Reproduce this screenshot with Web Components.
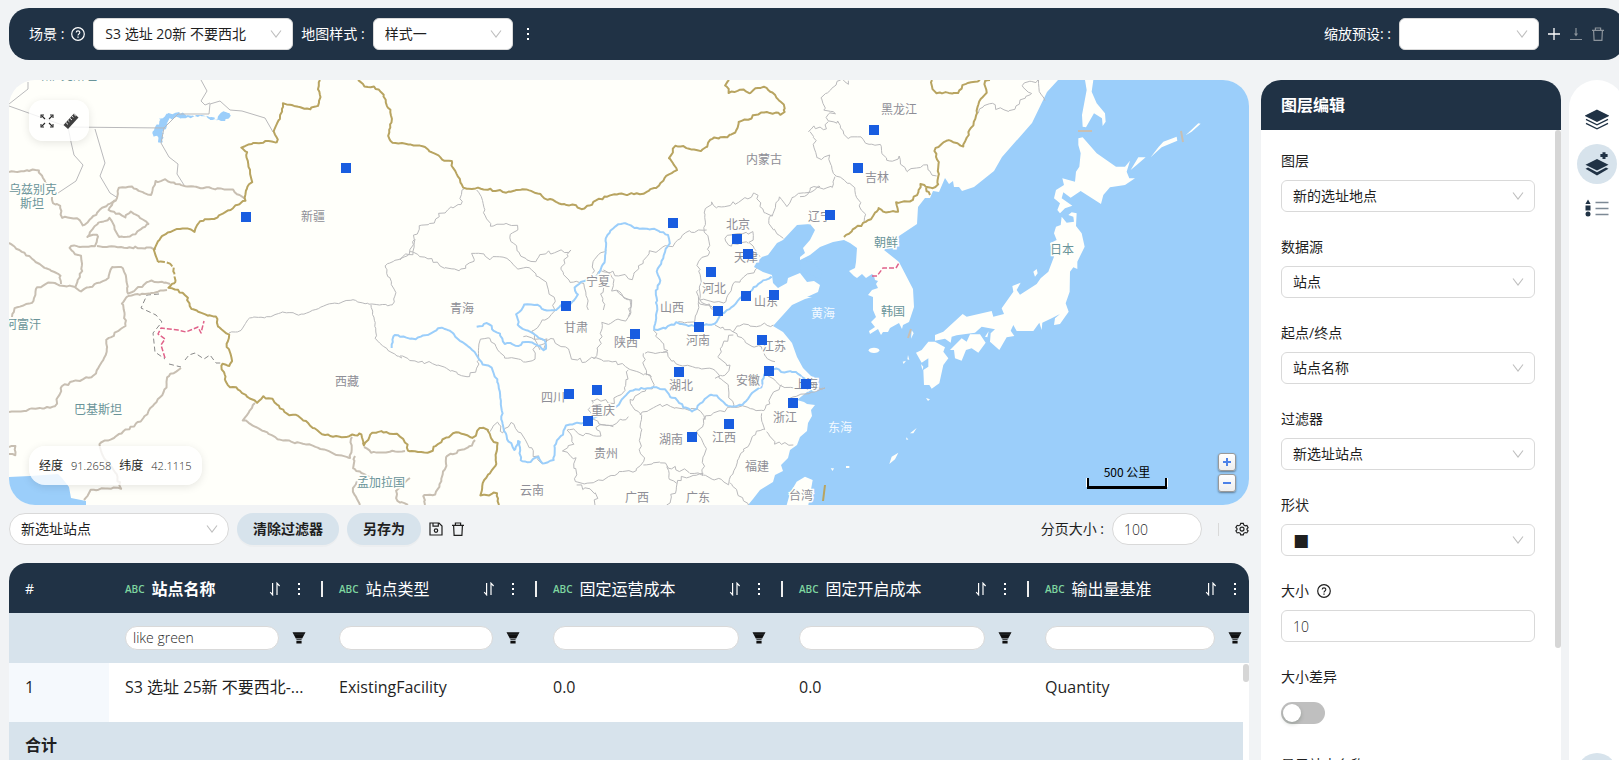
<!DOCTYPE html>
<html lang="zh-CN">
<head>
<meta charset="utf-8">
<title>选址地图</title>
<style>
  html, body { margin: 0; height: 100%; overflow: hidden; }
  body {
    background: #f1f3f5;
    color: #1f1f1f;
    font: 14px/22px "Open Sans", "Noto Sans CJK SC", sans-serif;
    font-weight: 300;
    --navy: #203245;
    --pale: #d7e3ec;
    --line: #d9d9d9;
  }
</style>
</head>
<body>
<planner-app>
  <top-bar slot="bar"></top-bar>
  <site-map slot="main"></site-map>
  <filter-bar slot="main"></filter-bar>
  <data-grid slot="main"></data-grid>
  <layer-panel slot="panel" heading="图层编辑">
    <ui-select label="图层" value="新的选址地点"></ui-select>
    <ui-select label="数据源" value="站点"></ui-select>
    <ui-select label="起点/终点" value="站点名称"></ui-select>
    <ui-select label="过滤器" value="新选址站点"></ui-select>
    <ui-select label="形状" value="■"></ui-select>
    <ui-input label="大小" value="10" help></ui-input>
    <ui-switch label="大小差异"></ui-switch>
    <ui-switch label="显示站点名称"></ui-switch>
  </layer-panel>
  <side-rail slot="rail"></side-rail>
</planner-app>

<script>
const icons = {
  help: `<svg width="14" height="14" viewBox="0 0 14 14" fill="none" stroke="currentColor"><circle cx="7" cy="7" r="6.3" stroke-width="1.2"/><path d="M5.2 5.6C5.2 3.3 8.8 3.3 8.8 5.5C8.8 7 7 6.9 7 8.4" stroke-width="1.1"/><path d="M7 9.6V10.7" stroke-width="1.3"/></svg>`,
  chevron: `<svg width="12" height="12" viewBox="0 0 12 12" fill="none" stroke="#bfbfbf" stroke-width="1.1"><path d="M1 2.5L6 9.2L11 2.5"/></svg>`,
  dots: `<svg width="14" height="14" viewBox="0 0 14 14" fill="currentColor"><path d="M6 1h2v2H6zM6 6h2v2H6zM6 11h2v2H6z"/></svg>`,
  plus: `<svg width="14" height="14" viewBox="0 0 14 14" stroke="currentColor" stroke-width="1.3"><path d="M7 1V13M1 7H13"/></svg>`,
  download: `<svg width="14" height="14" viewBox="0 0 14 14" fill="none" stroke="currentColor"><path d="M7 1V8M1 12.5H13" stroke-width="1.2"/><path d="M5 6.5L7 9.5L9 6.5Z" fill="currentColor" stroke="none"/></svg>`,
  trash: `<svg width="14" height="14" viewBox="0 0 14 14" fill="none" stroke="currentColor" stroke-width="1.2"><path d="M1 3.4H13M4.4 3V1H9.6V3M2.6 3.6L3.1 13.3H10.9L11.4 3.6"/></svg>`,
  save: `<svg width="14" height="14" viewBox="0 0 14 14" fill="none" stroke="currentColor" stroke-width="1.2"><path d="M1 1H10L13 4V13H1ZM4 1V4.2H9.3V1"/><circle cx="7" cy="8.6" r="1.7"/></svg>`,
  gear: `<svg width="14" height="14" viewBox="0 0 16 16" fill="none" stroke="currentColor" stroke-width="1.3"><path d="M6.5 1.5H9.5L10 3.4L11.7 4.4L13.6 3.9L15 6.4L13.7 7.8V8.9L15 10.1L13.5 12.5L11.7 12L10 13L9.5 14.7H6.5L6 13L4.3 12L2.5 12.5L1 10.1L2.3 8.8V7.4L1 6.2L2.5 3.8L4.3 4.3L6 3.4Z"/><circle cx="8" cy="8.1" r="2.3"/></svg>`,
  sort: `<svg width="12" height="14" viewBox="0 0 12 14" fill="none" stroke="currentColor" stroke-width="1.2"><path d="M1.2 10.2L3.6 12.8V1M8 13V1.2L10.6 4"/></svg>`,
  funnel: `<svg width="16" height="14" viewBox="-1 0 16 14" fill="#101010"><path d="M0.5 1.2H13.5L10.2 7.4H3.8ZM4.4 8.2H9.6V9.2H4.4ZM4.4 10H9.6V12.6H4.4Z"/><path d="M2 3.2H12" stroke="#333c42" stroke-width=".6"/></svg>`,
  expand: `<svg width="14" height="14" viewBox="0 0 14 14" fill="none" stroke="#262626" stroke-width="1.1"><path d="M1.500 1.500L5 5M12.500 1.500L9 5M1.500 12.500L5 9M12.500 12.500L9 9"/><path d="M1 4V1H4M10 1H13V4M1 10V13H4M13 10V13H10"/></svg>`,
  ruler: `<svg width="18" height="18" viewBox="0 0 18 18"><path d="M1.5 13L12 1.5L16.5 5.5L6 17Z" fill="#3f3f3f"/><path d="M4 10.6L6 12.4M6 8.5L7.4 9.8M8 6.3L10 8M10 4.2L11.4 5.4M11.8 2.2L13.8 4" stroke="#fff" stroke-width=".9"/></svg>`,
  layers: `<svg width="24" height="22" viewBox="0 0 24 22" fill="none" stroke="#203245" stroke-width="1.3"><path d="M12 1.3L23 6.8L12 12.3L1 6.8Z" fill="#203245"/><path d="M1 10.3L12 15.8L23 10.3M1 14.3L12 19.8L23 14.3"/></svg>`,
  layersAdd: `<svg width="24" height="24" viewBox="0 0 24 24" fill="#203245"><path d="M12 7L23.5 12.8L12 18.6L.5 12.8Z"/><path d="M.5 16.8L3 15.6L12 20.2L21 15.6L23.5 16.8L12 23.4Z"/><path d="M17.5.2H20.500V2H22.600V5H20.500V7H17.500V5H15.400V2H17.500Z"/></svg>`,
  legend: `<svg width="24" height="18" viewBox="0 0 24 18" fill="#203245"><path d="M3 .5L5.6 5H.4ZM.5 6.4H5.5V11.4H.5Z"/><circle cx="3" cy="15" r="2.5"/><path d="M10.5 3.5H23.5M10.5 9.5H23.5M10.5 15.5H23.5" stroke="#7d8995" stroke-width="1.3"/></svg>`
};

const base = `
  * { box-sizing: border-box; }
  svg { display: block; flex: none; }
  button, input, select { font: inherit; color: inherit; margin: 0; }
  button { border: 0; background: none; padding: 0; cursor: pointer; }
  .icon { display: grid; place-items: center; width: 22px; height: 22px; }
`;

function mount(el, css, html) {
  const template = document.createElement('template');
  template.innerHTML = `<style>${base}${css}</style>${html}`;
  el.attachShadow({ mode: 'open' }).appendChild(template.content.cloneNode(true));
}

class PlannerApp extends HTMLElement {
  constructor() {
    super();
    mount(this, `
      :host { display: flex; flex-direction: column; gap: 20px; height: calc(100vh + 33px); padding-top: 8px; margin: 0 -6px 0 9px; box-sizing: border-box; }
      .body { flex: 1; min-height: 0; display: grid; grid-template-columns: minmax(0, 1fr) 300px 56px; gap: 8px; }
      main { display: flex; flex-direction: column; min-height: 0; padding-right: 4px; }
    `, `
      <slot name="bar"></slot>
      <div class="body">
        <main><slot name="main"></slot></main>
        <slot name="panel"></slot>
        <slot name="rail"></slot>
      </div>
    `);
  }
}

// Drop-down with its own label. inline = label on the left.
class UiSelect extends HTMLElement {
  constructor() {
    super();
    const value = this.getAttribute('value') || '';
    const label = this.getAttribute('label') || '';
    const inline = this.hasAttribute('inline');
    mount(this, `
      :host { display: flex; flex-direction: column; gap: 8px; }
      :host([inline]) { flex-direction: row; align-items: center; }
      .label { display: flex; align-items: center; gap: 7px; font-weight: 400; }
      .box { display: grid; align-items: center; width: var(--select-width, 100%); }
      .box svg { grid-area: 1 / 1; justify-self: end; margin-right: 11px; pointer-events: none; }
      select {
        grid-area: 1 / 1; appearance: none; width: 100%; height: 32px; padding: 0 28px 0 11px;
        border: 1px solid var(--line); border-radius: var(--select-radius, 6px);
        background: #fff; color: #1f1f1f; font-weight: 400;
      }
      .shape { font: 17px/20px "DejaVu Sans", sans-serif; }
    `, `
      ${label ? `<div class="label"><label for="s">${label}${inline ? ' :' : ''}</label>${this.hasAttribute('help') ? icons.help : ''}</div>` : ''}
      <div class="box">
        <select id="s" ${label ? '' : 'aria-label="过滤器"'} class="${value === '■' ? 'shape' : ''}"><option>${value}</option></select>
        ${icons.chevron}
      </div>
    `);
  }
}

class UiInput extends HTMLElement {
  constructor() {
    super();
    mount(this, `
      :host { display: flex; flex-direction: column; gap: 8px; }
      :host([inline]) { flex-direction: row; align-items: center; }
      .label { display: flex; align-items: center; gap: 8px; font-weight: 400; }
      input {
        width: var(--input-width, 100%); height: 32px; padding: 0 11px;
        border: 1px solid var(--line); border-radius: var(--input-radius, 6px); background: #fff;
      }
    `, `
      <div class="label"><label for="i">${this.getAttribute('label')}${this.hasAttribute('inline') ? ' :' : ''}</label>${this.hasAttribute('help') ? icons.help : ''}</div>
      <input id="i" type="text" value="${this.getAttribute('value')}">
    `);
  }
}

class UiSwitch extends HTMLElement {
  constructor() {
    super();
    mount(this, `
      :host { display: flex; flex-direction: column; gap: 8px; }
      label { font-weight: 400; }
      .row { display: flex; align-items: center; height: 34px; }
      input {
        appearance: none; width: 44px; height: 22px; border-radius: 11px; padding: 2px;
        background: #bfbfbf; display: flex;
      }
      input::before { content: ""; width: 18px; height: 18px; border-radius: 50%; background: #fff; box-shadow: 0 2px 4px rgba(0,35,11,.2); }
      input:checked { background: var(--navy); justify-content: end; }
    `, `
      <label for="c">${this.getAttribute('label')}</label>
      <div class="row"><input id="c" type="checkbox" role="switch"></div>
    `);
  }
}

class TopBar extends HTMLElement {
  constructor() {
    super();
    mount(this, `
      :host { display: flex; align-items: center; gap: 8px; height: 52px; padding: 0 16px 0 20px; border-radius: 20px; background: var(--navy); color: #fff; flex: none; }
      .scene { --select-width: 200px; }
      .style, .preset { --select-width: 140px; }
      .space { flex: 1; }
      .icon { margin-left: -4px; }
      .tools { display: flex; margin-left: -4px; }
      .tools .icon { margin-left: 0; }
      .dim { color: #8b939b; }
    `, `
      <ui-select class="scene" inline help label="场景" value="S3 选址 20新 不要西北"></ui-select>
      <ui-select class="style" inline label="地图样式" value="样式一"></ui-select>
      <button class="icon" aria-label="更多">${icons.dots}</button>
      <span class="space"></span>
      <ui-select class="preset" inline label="缩放预设:" value=""></ui-select>
      <div class="tools">
        <button class="icon" aria-label="新增">${icons.plus}</button>
        <button class="icon dim" aria-label="下载">${icons.download}</button>
        <button class="icon dim" aria-label="删除">${icons.trash}</button>
      </div>
    `);
  }
}

const sites = [[346,168],[246,217],[673,223],[737,239],[748,254],[711,272],[746,296],[774,295],[718,311],[566,306],[635,334],[699,327],[762,340],[769,371],[679,372],[569,394],[597,390],[588,421],[806,384],[793,403],[729,424],[692,437],[874,130],[858,168],[830,215]];

const provinces = [['新疆',313,217],['内蒙古',764,160],['黑龙江',899,110],['吉林',877,178],['辽宁',820,217],['北京',738,225],['天津',746,258],['河北',714,289],['山东',766,302],['山西',672,308],['宁夏',598,282],['甘肃',576,328],['青海',462,309],['陕西',626,343],['河南',698,341],['江苏',774,347],['安徽',748,381],['湖北',681,386],['上海',806,385],['浙江',785,418],['四川',553,398],['重庆',603,411],['贵州',606,454],['湖南',671,440],['江西',724,438],['福建',757,467],['台湾',801,496],['云南',532,491],['广西',637,498],['广东',698,498],['西藏',347,382]];

const countries = [['乌兹别克',33,190],['斯坦',32,204],['阿富汗',23,325],['巴基斯坦',98,410],['孟加拉国',381,483],['朝鲜',886,243],['日本',1062,250],['韩国',893,312],['哈萨克斯坦',67,76],['蒙古',556,75]];

const seas = [['黄海',823,314],['东海',840,428]];

const texts = (list) => list.map(([name, x, y]) => `<text x="${x}" y="${y + 4}">${name}</text>`).join('');

// Turns straight border segments into natural looking ones.
function roughen(path, step, amount) {
  let seed = 7;
  const random = () => {
    seed = (seed * 16807) % 2147483647;
    return seed / 2147483647 - 0.5;
  };
  const parts = path.getAttribute('d').split('M').filter(Boolean);
  const probe = document.createElementNS('http://www.w3.org/2000/svg', 'path');
  path.setAttribute('d', parts.map((part) => {
    probe.setAttribute('d', 'M' + part);
    const length = probe.getTotalLength();
    const count = Math.max(1, Math.round(length / step));
    const points = [];
    for (let i = 0; i <= count; i++) {
      const p = probe.getPointAtLength(length * i / count);
      const k = i === 0 || i === count ? 0 : amount;
      points.push(`${(p.x + random() * k).toFixed(1)} ${(p.y + random() * k).toFixed(1)}`);
    }
    return 'M' + points.join('L');
  }).join(''));
}

class SiteMap extends HTMLElement {
  constructor() {
    super();
    mount(this, `
      :host { display: block; position: relative; flex: none; border-radius: 26px; overflow: hidden; background: #fffffa; }
      .map { width: 100%; height: auto; }
      .map path { fill: none; stroke-linejoin: round; vector-effect: non-scaling-stroke; }
      .map .sea { fill: #9bcefa; }
      .map .land path, .map .land ellipse { fill: #fffffa; }
      .gold path { stroke: #b8a460; stroke-width: 2; }
      .taupe path { stroke: #c8bfb2; stroke-width: 2; }
      .prov path { stroke: #b9b9bb; stroke-width: 1; }
      .river path { stroke: #9bcefa; stroke-width: 2; }
      .cease path { stroke: #e0628a; stroke-width: 1.5; stroke-dasharray: 5 2; }
      .claim path { stroke: #8a8a8a; stroke-width: 1; stroke-dasharray: 5 3; }
      text { font-size: 12px; text-anchor: middle; paint-order: stroke; stroke: #fffffa; stroke-width: 3px; fill: #8e8e96; font-weight: 400; }
      .country text { fill: #6a9499; }
      .ocean text { fill: #f4faff; stroke: none; }
      .card { position: absolute; left: 20px; display: flex; align-items: center; background: rgba(255,255,255,.8); border-radius: 14px; box-shadow: 0 2px 8px rgba(0,0,0,.1); }
      .tools { top: 20px; height: 41px; padding: 0 7px; gap: 2px; }
      .coords { bottom: 20px; height: 39px; padding: 0 10px; gap: 8px; font-size: 11px; border-radius: 16px; }
      .coords b { font-size: 12px; font-weight: 400; }
      .scale { position: absolute; right: 81px; bottom: 18px; width: 82px; font: 400 12px/12px "Noto Sans CJK SC", sans-serif; color: #000; text-align: center; }
      .scale i { display: block; height: 9px; border: solid #fff; border-width: 0 1px 1px; }
      .scale i::before { content: ""; display: block; height: 8px; border: solid #000; border-width: 0 2px 3px; }
      .zoom { position: absolute; right: 13px; bottom: 13px; display: grid; gap: 3px; }
      .zoom button { width: 18px; height: 18px; display: grid; place-items: center; border: 1px solid #999; border-radius: 3px; background: linear-gradient(#fff, #eee); box-shadow: 0 1px 2px rgba(0,0,0,.4); }
    `, `
      <svg class="map" viewBox="9 80 1240 425" role="img" aria-label="站点地图">
        <path class="sea" d="M1058 80L1047 92L1032 123L1002 157L994 171L974 187L962 191L959 187L954 187L953 181L949 184L945 178L939 192L933 191L930 198L925 198L918 207L917 224L899 236L884 250L899 262L913 289L914 307L909 322L903 325L902 329L899 323L890 328L888 332L883 332L881 335L878 329L870 334L869 331L875 327L871 322L876 317L873 310L873 297L868 295L872 290L878 288L876 284L878 281L875 280L874 276L872 274L866 278L862 274L857 278L854 276L849 271L855 268L856 262L857 248L850 243L844 240L833 242L820 247L810 255L800 260L800 257L805 253L803 248L810 240L815 230L810 224L797 225L783 240L777 243L768 255L762 257L756 263L754 267L763 272L772 275L773 283L778 288L787 283L788 278L800 273L807 282L814 281L820 285L818 292L807 297L800 297L812 297L805 299L792 305L783 315L773 326L783 332L792 343L797 357L803 368L813 378L818 387L807 392L797 400L804 402L807 404L815 405L811 410L812 416L808 423L807 431L800 437L797 445L790 450L788 458L781 465L783 471L775 475L773 482L760 490L753 499L748 505H1249V80Z"/>
        <path class="sea" d="M801 260L812 262L822 271L820 279L800 270Z"/>
        <path class="sea" d="M9 477L30 476L58 474L62 478L69 487L71 498L86 501V505H9Z"/>
        <path class="sea lake" d="M167 114L172 114L176 112L186 115L207 116L216 120L222 112L230 113L229 119L216 121L206 117L180 117L170 119L163 130L162 143H158L157 137L152 135L155 126L160 124L160 118Z"/>

        <g class="land">
          <g transform="translate(800 70) scale(.33333)">
            <path d="M835 205L848 202L890 250L948 290L975 290L990 272L980 305L988 325L1005 325L975 345L930 352L910 375L903 402L842 363L812 383L790 367L785 385L817 407L795 415L780 430L772 420L780 400L762 385L768 360L792 345L787 325L825 335L828 305L838 290L842 250L835 225Z"/>
            <path d="M855 30H880L875 65L890 100L915 130L917 155L908 168L906 145L882 130L858 172L848 170L846 135L860 60Z"/>
            <path d="M785 440L800 458L822 455L820 440L805 435L815 427L830 430L828 468L845 490L854 530L832 575V597L820 592L810 605L809 665L797 700L806 725L780 762L762 765L765 745L780 732L755 745L727 758L725 780L718 758L700 783H650L640 765L632 782L643 798L620 802L598 840L570 815L572 790L585 778L545 770L525 788L470 796L455 800L452 818L435 806L405 812V795L430 785L488 732L500 740L575 723L580 740L612 732L605 715L640 665L637 648L662 638L650 660L660 674L710 642L722 625L745 605L762 560L750 520L770 510L762 490L768 470L782 465Z"/>
            <path d="M385 815L405 815L435 832L430 845L445 865L430 885L418 940L395 956L388 945L372 945L370 900L385 890V865L365 878L348 848L365 840Z"/>
            <path d="M450 840L485 805L500 815L510 793L540 793L557 818L535 848L515 835L498 840L485 872L465 865L462 840Z"/>
            <path d="M700 605L710 597L713 610L705 620ZM992 300L1015 262L1037 262L1010 285ZM1052 262L1075 232L1090 215L1130 200L1132 212L1085 232ZM1157 196L1195 160L1202 161L1175 185ZM330 1090L350 1074L340 1090ZM268 1182L275 1160L295 1148L285 1168ZM92 1195H102L98 1203ZM138 1188H148V1194H138ZM308 875L318 872L311 882ZM324 855L328 870L322 868ZM335 780L341 790L333 806ZM378 984L390 988L384 993ZM318 1102L325 1108L320 1110ZM363 882L370 890L367 900ZM555 800L566 784L562 802Z"/>
            <ellipse cx="222" cy="841" rx="16" ry="8"/>
            <path d="M-40 1305L-30 1270L-10 1235L15 1220L38 1230L25 1305Z"/>
          </g>
        </g>

        <g class="prov">
          <g class="tile" transform="translate(800 70) scale(.33333)">
            <path d="M122 30L60 85L75 120L105 125L80 135L85 155H118L125 190L150 205L185 200L190 220L240 225L245 250L280 280L298 260L320 310L375 285L410 318"/>
            <path d="M130 30L142 45L145 32M25 185L35 170L70 180L85 155M30 185L45 210L42 250L60 270L85 260L100 310L140 340L155 340L165 375L180 395L192 440V458M0 380L40 355L75 358L105 345V320"/>
            <path d="M535 130L550 105L575 98L590 118L635 122L655 95L695 75L665 45L715 30L722 80L735 92"/>
          </g>
          <g class="tile" transform="translate(400 70) scale(.33333)">
            <path d="M195 355L180 375L185 400L120 430L88 465L55 470L30 545L0 570M230 360L252 410L247 430L280 470L348 460L350 485L325 510L375 560L412 575L425 550L480 545L510 540L480 600L515 640L550 635L565 720"/>
            <path d="M30 545L95 570L120 590L190 600L220 570V548L270 565L310 560L350 595L390 595L420 620L460 680L465 720M620 540L585 560L580 620L610 600L690 625L710 600L750 545L830 520L850 490L920 480"/>
            <path d="M610 600L640 620L635 660L690 690L685 740M605 640L610 720M945 720L895 690L900 620L895 580L930 550L915 470L910 430L940 390L950 415L1020 395L1065 365L1090 430L1115 433L1135 380L1160 410L1180 380L1260 350M1115 435L1110 465L1150 505"/>
            <path d="M975 505L1000 490L1060 490L1050 520L1080 560M975 505L980 525L1045 520M900 690L970 700L1000 640L1060 610L1070 595"/>
          </g>
          <g class="tile" transform="translate(400 290) scale(.33333)">
            <path d="M0 198L50 215L120 225L160 245L190 262L230 245L240 150L265 140L290 180L325 205L370 215L400 205L405 180L460 140L480 165L500 165L520 205L560 215L580 200L600 160L605 100L690 85L692 35L650 0"/>
            <path d="M580 205L640 215L685 235L755 260L758 290L690 330L690 340L720 375L720 460L730 520L700 540L630 560L600 570L530 580L525 510L490 480L520 460L500 410L530 430L600 440L590 410L640 400L685 380M685 240L680 290L640 335L575 330L570 370L600 400L640 410"/>
            <path d="M735 190L800 185L760 120M730 190L735 250L755 260M790 185L830 225L945 240L970 270L985 300L1000 350M895 0L890 90L835 95M895 35L960 60M945 105L1000 125L1040 160L1085 175L1100 210L1125 215M1000 125L1015 105L1120 105M1000 135L980 150L950 200L990 225V250L945 265"/>
            <path d="M720 375L770 345L850 355L900 360L910 385L985 355L1030 350L1090 365L1110 330L1145 285M910 385L895 430L915 480L910 555L800 530L790 515L730 525M910 555L985 580L1010 520L1060 430L1095 425L1085 370M1100 425L1130 460L1180 465M990 578L1045 645M910 550L840 560L830 590L800 645M800 530L805 570L830 580M530 585L590 610L585 645M270 425L290 390L310 430L330 400L365 440L400 490L425 520M420 180L400 130L425 90L470 60"/>
            <path d="M370 140L440 150L430 180M1100 250L1150 295L1275 293M1170 325L1220 310L1275 295"/>
          </g>
          <g class="fine">
            <path d="M229 333L240 331L250 317L272 317L280 312L303 315L325 305L355 300L371 305H393L396 293L384 265L412 254L414 244L415 239"/>
            <path d="M371 305L375 325L376 340L390 352L402 358"/>
          </g>
          <path d="M28 82L28 89L9 104M9 106L68 127L164 128L178 114L209 114L210 104L220 101L230 110L242 111L265 118L273 132M201 80L207 91L201 101L205 105L210 103M95 129L105 163L100 176L110 193L118 198M68 127L71 142L74 155L83 165L76 181L58 193M164 128L161 143L169 157L178 164L177 174L184 185"/>
        </g>
        <g class="claim">
          <path d="M159 294L147 295L141 308L156 315L162 322L153 333L155 352L165 359M169 364L181 367M185 360L189 355L195 353L204 359L210 355L216 363L221 363"/>
        </g>

        <g class="taupe fine">
          <path d="M9 172L38 170L47 185M52 197V203L60 205L61 217L78 219L83 226L98 212L115 200L120 188L132 187L152 195L155 182L165 180L184 186L232 190L245 199"/>
          <path d="M115 200L108 210L125 217L130 211L149 224L130 237H118L110 218L96 225L86 237L98 235L95 246H70L72 252L80 255L82 270L75 287L80 291L108 279L112 267L120 266L127 277L128 294L150 281L170 284M97 246L125 247L148 248L156 249"/>
          <path d="M9 243L45 268L60 275L61 284M12 317L14 309L33 302L36 288L50 283L75 287M128 296L167 290M128 296L122 304L126 325L106 340L107 352L95 375L62 386L55 407L9 412M181 368L168 375L165 390L140 422L113 438L100 443L101 455L115 472L121 488L90 490L84 500"/>
          <path d="M255 403L243 420L280 440L310 445L350 459L352 437M364 447L370 452L405 451M355 456L352 468L375 480M357 481L352 490L360 505M410 478L397 490L395 500L408 505M475 440L473 445L447 456L445 470L435 495L423 494L425 505"/>
          <path d="M9 447L15 446V455L9 454"/>
        </g>

        <g class="river">
          <g class="tile" transform="translate(400 290) scale(.33333)">
            <path d="M-25 174L-20 133L10 142L45 147L60 138L90 135L105 120L125 113L140 122L155 123L165 140L190 160L215 177L235 205L250 222L270 230L290 265V280L298 285L300 330L308 360L305 390L320 440L343 482L357 450L362 515L385 517L415 500L425 523L462 510V465L485 440L500 405L560 395L650 348L690 300L755 292L795 298L812 325L825 325L850 350L880 365L910 332L930 312L955 320L985 352L1025 345L1060 305L1080 295L1100 240L1130 235L1145 245L1185 245L1210 265L1250 280"/>
            <path d="M230 110H245L255 97L272 105L280 125L300 130L310 160H332L350 170L375 155L415 165L430 182L440 175L432 150L410 140L390 125L355 108L350 70L375 45L410 45L435 60L470 58L480 48L515 40L533 18L520 -5L545 -25L590 -40L615 -90L618 -155L640 -190L670 -202L710 -185L770 -182L808 -162V-140L790 -100L770 -55L780 -30L768 0L770 60L762 120L800 113L830 98L860 108L945 103L960 75L990 55L1030 15L1055 0L1080 -20L1115 -40"/>
          </g>
        </g>

        <g class="gold fine">
          <path d="M320 80L318 87L320 97L318 106L314 106L310 109L297 107L284 103L279 120L273 133L278 140L276 143L267 141L253 144L241 147L247 153L248 167L253 180L247 187L245 201L233 207L214 219L200 220L194 231L184 228L172 231L160 237L154 248L158 262"/>
          <path stroke-dasharray="7 2" d="M158 262H168L173 267L175 283"/>
          <path d="M175 283L168 287L177 290L187 297L190 308L203 314L216 317L218 327L229 335L226 345L232 358L230 367L221 364L228 387L237 388L258 403L262 397L270 398L288 415L297 415L312 427L323 435L340 437L362 434L364 446L370 435L377 431L398 435L407 443V451L430 452L437 444L455 432L474 438L481 427L488 430L491 440L497 443L496 465L482 482L481 496L497 493L499 505"/>
          <path d="M358 80L366 87L374 87L384 95L386 105L391 112V125L388 135L391 143L407 144L425 147L443 160H451L452 165L458 178L465 188L477 188L507 192L523 189L538 193L543 198L552 200L562 205H575L582 209L603 198L615 194L643 194L656 188L665 177L677 169L669 158L675 146H683L687 149L699 151L707 147L712 138H725L735 132L740 121L751 119L752 116L765 112L782 114L785 112L783 105L773 93L765 87H756L750 94L743 90L730 93L725 85L729 80"/>
          <path d="M932 80L931 85L935 93L957 93L963 85L980 80M990 80L984 82L987 93L978 102L975 120L963 146L947 140L935 149L939 163L938 185L930 188L921 184L917 195L908 202H896L898 212H883L879 207L868 222L855 228L844 237M926 188L930 195"/>
        </g>
        <g class="gold"><path d="M825 485L823 501"/></g>
        <g class="taupe"><path d="M1078 131H1092M1181 131L1183 142M911 329L908 338"/></g>
        <g class="cease">
          <path d="M872 276H877L883 268H896L899 263M165 358L161 345L165 339L158 334L161 328L178 330L186 332L198 327L201 333L204 321"/>
        </g>

        <g>${texts(provinces)}</g>
        <g class="country">${texts(countries)}</g>
        <g class="ocean">${texts(seas)}</g>
        <g fill="#195de0">${sites.map(([x, y]) => `<rect x="${x - 5}" y="${y - 5}" width="10" height="10"/>`).join('')}</g>
      </svg>
      <div class="card tools">
        <button class="icon" aria-label="全屏">${icons.expand}</button>
        <button class="icon" aria-label="测量">${icons.ruler}</button>
      </div>
      <div class="card coords"><b>经度</b><span>91.2658</span><b>纬度</b><span>42.1115</span></div>
      <div class="scale">500 公里<i></i></div>
      <div class="zoom">
        <button aria-label="放大"><svg width="10" height="10" stroke="#4d82e8" stroke-width="2"><path d="M5 1V9M1 5H9"/></svg></button>
        <button aria-label="缩小"><svg width="10" height="10" stroke="#4d82e8" stroke-width="2"><path d="M1 5H9"/></svg></button>
      </div>
    `);
    this.shadowRoot.querySelectorAll('.prov .tile path').forEach((p) => roughen(p, 11, 12));
    this.shadowRoot.querySelectorAll('.river .tile path').forEach((p) => roughen(p, 9, 5));
    this.shadowRoot.querySelectorAll('.fine path').forEach((p) => roughen(p, 3, 2));
    this.shadowRoot.querySelectorAll('.lake').forEach((p) => roughen(p, 2, 3));
  }
}

class FilterBar extends HTMLElement {
  constructor() {
    super();
    mount(this, `
      :host { display: flex; align-items: center; gap: 8px; margin: 8px 0 18px; flex: none; }
      .filter { --select-width: 220px; --select-radius: 16px; }
      .size { --input-width: 90px; --input-radius: 16px; }
      .pill { height: 32px; padding: 0 16px; border-radius: 16px; background: var(--pale); font-weight: 700; box-shadow: 0 2px 0 rgba(0,0,0,.02); }
      .tools { display: flex; margin-left: -4px; }
      .space { flex: 1; }
      .rule { width: 1px; height: 13px; margin: 0 8px; background: var(--line); }
    `, `
      <ui-select class="filter" value="新选址站点"></ui-select>
      <button class="pill">清除过滤器</button>
      <button class="pill">另存为</button>
      <div class="tools">
        <button class="icon" aria-label="保存">${icons.save}</button>
        <button class="icon" aria-label="删除">${icons.trash}</button>
      </div>
      <span class="space"></span>
      <ui-input class="size" inline label="分页大小" value="100"></ui-input>
      <span class="rule"></span>
      <button aria-label="设置">${icons.gear}</button>
    `);
  }
}

const columns = [
  { title: '站点名称', width: 214, filter: 'like green', cell: 'S3 选址 25新 不要西北-...', bold: true },
  { title: '站点类型', width: 214, filter: '', cell: 'ExistingFacility' },
  { title: '固定运营成本', width: 246, filter: '', cell: '0.0' },
  { title: '固定开启成本', width: 246, filter: '', cell: '0.0' },
  { title: '输出量基准', width: 230, filter: '', cell: 'Quantity' }
];

class DataGrid extends HTMLElement {
  constructor() {
    super();
    mount(this, `
      :host { display: block; position: relative; flex: 1; min-height: 0; overflow: hidden; border-radius: 18px 18px 0 0; background: #fff; }
      table { width: calc(100% + 10px); table-layout: fixed; border-collapse: collapse; font-size: 16px; line-height: 24px; font-weight: 400; }
      th, td { padding: 0 16px; text-align: left; font-weight: 400; }
      .head th { height: 50px; padding: 2px 0 0 16px; background: var(--navy); color: #fff; }
      .head th:first-child { font-size: 14px; }
      .cell { display: flex; align-items: center; }
      .abc { color: #7fd6a0; font-size: 10px; font-weight: 600; margin-right: 7px; }
      .bold { font-weight: 700; }
      .cell .grow { flex: 1; }
      .rule { width: 2px; height: 16px; margin-left: 10px; background: #eee; }
      .head button { width: 24px; height: 24px; display: grid; place-items: center; }
      .filters td { height: 50px; background: var(--pale); }
      .filters .cell { gap: 12px; }
      .filters input { flex: 1; min-width: 0; height: 24px; padding: 0 7px; border: 1px solid var(--line); border-radius: 12px; background: #fff; font-size: 14px; font-weight: 300; }
      .row td { height: 59px; vertical-align: top; padding-top: 12px; white-space: nowrap; }
      .row td:first-child { background: #f5f9fd; }
      .total td { height: 59px; vertical-align: top; padding-top: 11px; background: var(--pale); font-weight: 700; }
      .track { position: absolute; right: 0; top: 100px; bottom: 0; width: 6px; background: #fff; }
      .track i { display: block; height: 18px; margin-top: 1px; border-radius: 3px; background: #d6d6d6; }
    `, `
      <table>
        <colgroup><col style="width:100px">${columns.map((c, i) => i < 4 ? `<col style="width:${c.width}px">` : '<col>').join('')}</colgroup>
        <thead>
          <tr class="head"><th>#</th>${columns.map((c) => `
            <th><div class="cell"><span class="abc">ABC</span><span class="${c.bold ? 'bold' : ''}">${c.title}</span><span class="grow"></span>
            <button aria-label="排序">${icons.sort}</button><button aria-label="菜单">${icons.dots}</button><span class="rule"></span></div></th>`).join('')}
          </tr>
          <tr class="filters"><td></td>${columns.map((c) => `
            <td><div class="cell"><input type="text" aria-label="${c.title}" value="${c.filter}">${icons.funnel}</div></td>`).join('')}
          </tr>
        </thead>
        <tbody>
          <tr class="row"><td>1</td>${columns.map((c) => `<td>${c.cell}</td>`).join('')}</tr>
        </tbody>
        <tfoot><tr class="total"><td colspan="6">合计</td></tr></tfoot>
      </table>
      <div class="track"><i></i></div>
    `);
  }
}

class LayerPanel extends HTMLElement {
  constructor() {
    super();
    mount(this, `
      :host { display: flex; flex-direction: column; min-height: 0; overflow: hidden; border-radius: 20px 20px 0 0; background: #fff; }
      h2 { flex: none; margin: 0; padding: 0 20px; font-size: 16px; line-height: 50px; font-weight: 700; background: var(--navy); color: #fff; }
      .scroll { display: flex; min-height: 0; }
      .fields { flex: 1; display: flex; flex-direction: column; gap: 24px; padding: 20px; }
      .bar { width: 6px; height: 518px; border-radius: 3px; background: #d6d6d6; }
    `, `
      <h2>${this.getAttribute('heading')}</h2>
      <div class="scroll"><div class="fields"><slot></slot></div><div class="bar"></div></div>
    `);
  }
}

class SideRail extends HTMLElement {
  constructor() {
    super();
    mount(this, `
      :host { display: flex; flex-direction: column; align-items: center; gap: 4px; padding: 20px 0 0; box-sizing: border-box; border-radius: 28px 28px 0 0; background: #fff; }
      button { width: 40px; height: 40px; border-radius: 50%; display: grid; place-items: center; }
      .on { background: var(--pale); }
      .last { margin-top: auto; background: var(--pale); }
    `, `
      <button aria-label="图层">${icons.layers}</button>
      <button class="on" aria-label="图层编辑">${icons.layersAdd}</button>
      <button aria-label="图例">${icons.legend}</button>
      <button class="last" aria-label="帮助">${icons.help}</button>
    `);
  }
}

customElements.define('ui-select', UiSelect);
customElements.define('ui-input', UiInput);
customElements.define('ui-switch', UiSwitch);
customElements.define('planner-app', PlannerApp);
customElements.define('top-bar', TopBar);
customElements.define('site-map', SiteMap);
customElements.define('filter-bar', FilterBar);
customElements.define('data-grid', DataGrid);
customElements.define('layer-panel', LayerPanel);
customElements.define('side-rail', SideRail);
</script>
</body>
</html>
